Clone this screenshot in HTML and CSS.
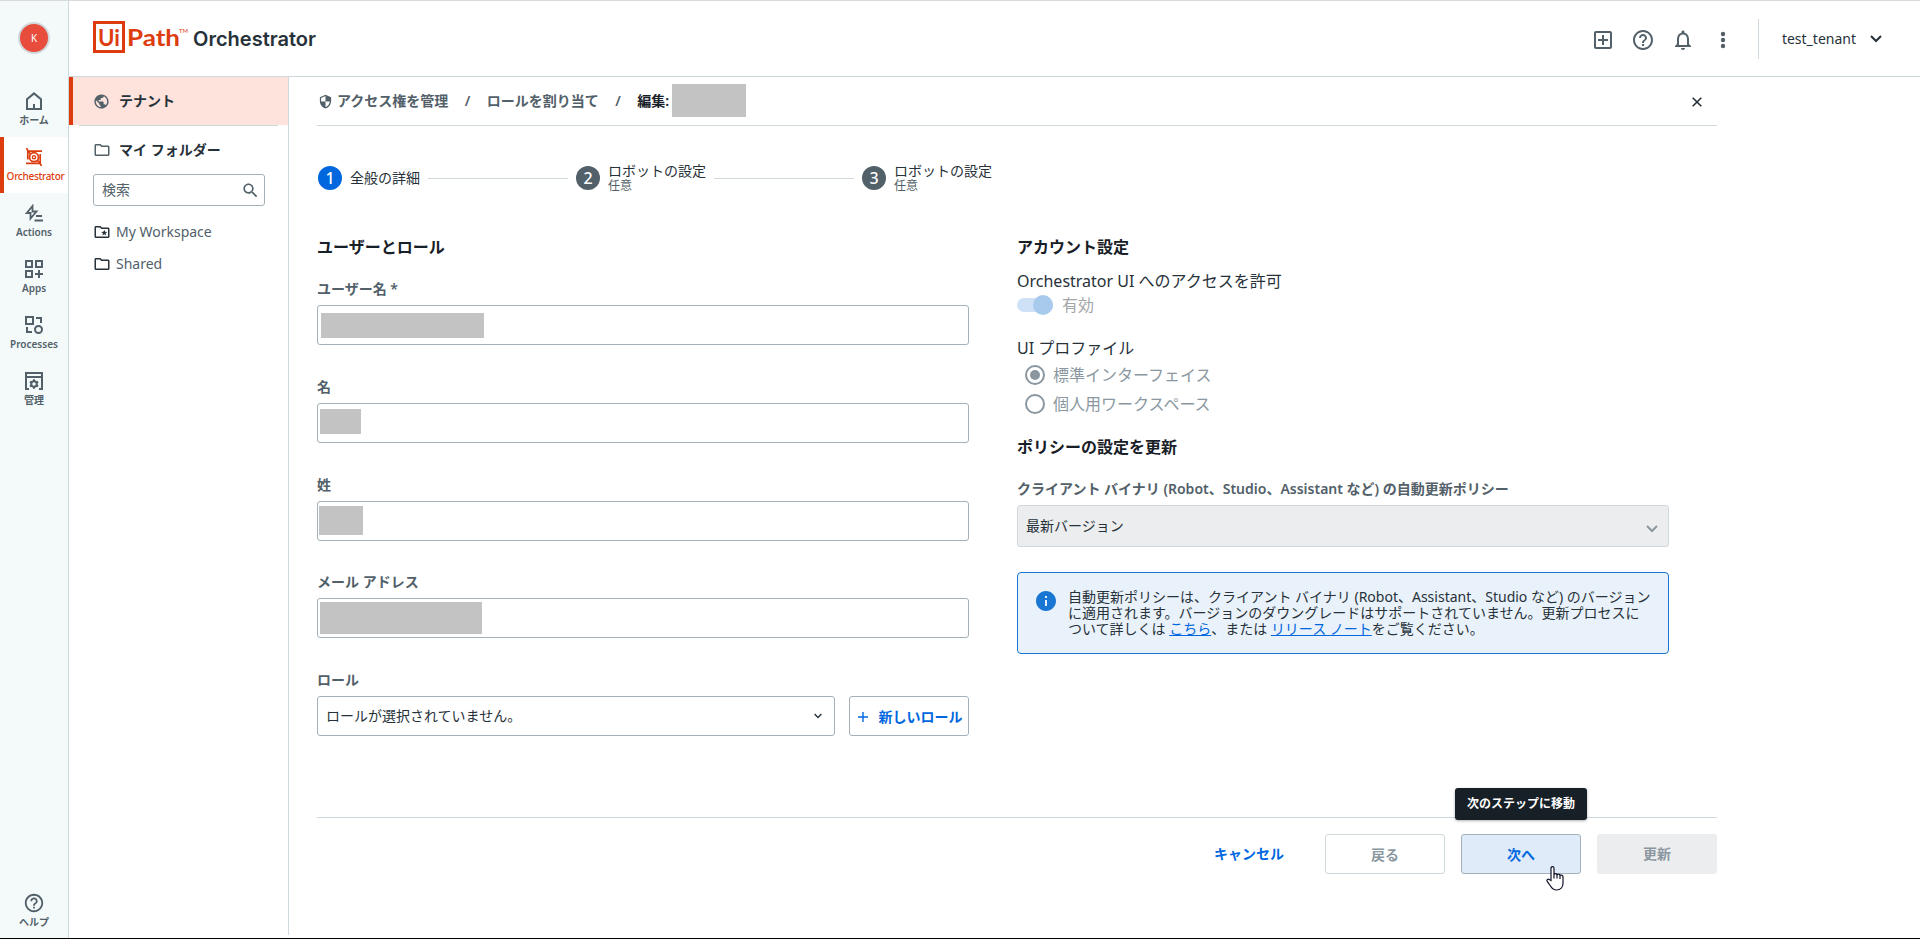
FILE: index.html
```html
<!DOCTYPE html>
<html lang="ja">
<head>
    <meta charset="UTF-8">
    <meta name="viewport" content="width=device-width, initial-scale=1.0">
    <title>UiPath Orchestrator</title>
    <link rel="stylesheet" href="styles.css">
</head>
<body>
    <!-- Product rail -->
    <nav class="rail">
        <div class="avatar">K</div>
        <a class="rail-item">
            <svg width="18" height="18" viewBox="0 0 18 18" fill="none" stroke="currentColor" stroke-width="2"><path d="M2 17V7.2L9 1.4l7 5.8V17zM9 17v-5"/></svg>
            <span>ホーム</span>
        </a>
        <a class="rail-item active">
            <svg width="18" height="18" viewBox="0 0 18 18" fill="none" stroke="currentColor"><path d="M1.500 0l1.500 3.200h14M2.800 3v8.500M16.500 18L15 15.300H1M15.200 15.500V6" stroke-width="1.700"/><circle cx="9" cy="9.200" r="4.500" stroke-width="1.800"/><circle cx="9" cy="9.200" r="1.600" stroke-width="1.400"/><path d="M2.800 3.200l3 3M15.200 15.300l-3-3" stroke-width="1.700"/></svg>
            <span>Orchestrator</span>
        </a>
        <a class="rail-item">
            <svg width="18" height="18" viewBox="0 0 18 18" fill="none" stroke="currentColor" stroke-width="1.800"><path d="M7.500 2L1.800 9h3.700v5.500L11.500 7.500H7.500z"/><path d="M11 12h6M9.500 16.500H18"/></svg>
            <span>Actions</span>
        </a>
        <a class="rail-item">
            <svg width="18" height="18" viewBox="0 0 18 18" fill="none" stroke="currentColor" stroke-width="2"><path d="M1 1h6v6H1zM11 1h6v6h-6zM1 11h6v6H1zM14 10v8M10 14h8"/></svg>
            <span>Apps</span>
        </a>
        <a class="rail-item">
            <svg width="18" height="18" viewBox="0 0 18 18" fill="none" stroke="currentColor" stroke-width="2"><path d="M1 1h7v7H1zM11 2h5v5M2 11v5h5"/><circle cx="13.500" cy="13.500" r="3.500"/></svg>
            <span>Processes</span>
        </a>
        <a class="rail-item">
            <svg width="18" height="18" viewBox="0 0 18 18" fill="none" stroke="currentColor" stroke-width="2"><path d="M4 17H1V1h16v16h-3M1 5h16"/><circle cx="9" cy="12" r="2.800"/><path d="M9 7.200v2M9 14.800v2M4.900 9.600l1.700 1M11.400 13.400l1.700 1M4.900 14.400l1.700-1M11.400 10.600l1.700-1"/></svg>
            <span>管理</span>
        </a>
        <a class="rail-item rail-help">
            <svg width="22" height="22" viewBox="0 0 24 24" fill="currentColor"><path d="M11 18h2v-2h-2v2zm1-16C6.480 2 2 6.480 2 12s4.480 10 10 10 10-4.480 10-10S17.520 2 12 2zm0 18c-4.410 0-8-3.590-8-8s3.590-8 8-8 8 3.590 8 8-3.590 8-8 8zm0-14c-2.210 0-4 1.790-4 4h2c0-1.100.9-2 2-2s2 .9 2 2c0 2-3 1.750-3 5h2c0-2.250 3-2.500 3-5 0-2.210-1.790-4-4-4z"/></svg>
            <span>ヘルプ</span>
        </a>
    </nav>

    <div class="page">
        <!-- Header -->
        <header class="header">
            <svg class="logo" width="226" height="35" viewBox="0 0 226 35">
                <rect x="1.500" y="1.500" width="29" height="29" fill="none" stroke="#dd3c0f" stroke-width="3"/>
                <text class="logo-ui" x="5" y="25" textLength="22" lengthAdjust="spacingAndGlyphs">Ui</text>
                <text class="logo-ui" x="34" y="25" textLength="53" lengthAdjust="spacingAndGlyphs">Path</text>
                <text class="logo-tm" x="86" y="12" textLength="9">TM</text>
                <text class="logo-name" x="100" y="25" textLength="123" lengthAdjust="spacingAndGlyphs">Orchestrator</text>
            </svg>
            <div class="header-actions">
                <svg width="24" height="24" viewBox="0 0 24 24" fill="currentColor"><path d="M19 3H5c-1.110 0-2 .9-2 2v14c0 1.100.89 2 2 2h14c1.100 0 2-.9 2-2V5c0-1.100-.9-2-2-2zm0 16H5V5h14v14zm-8-2h2v-4h4v-2h-4V7h-2v4H7v2h4z"/></svg>
                <svg width="24" height="24" viewBox="0 0 24 24" fill="currentColor"><path d="M11 18h2v-2h-2v2zm1-16C6.480 2 2 6.480 2 12s4.480 10 10 10 10-4.480 10-10S17.520 2 12 2zm0 18c-4.410 0-8-3.590-8-8s3.590-8 8-8 8 3.590 8 8-3.590 8-8 8zm0-14c-2.210 0-4 1.790-4 4h2c0-1.100.9-2 2-2s2 .9 2 2c0 2-3 1.750-3 5h2c0-2.250 3-2.500 3-5 0-2.210-1.790-4-4-4z"/></svg>
                <svg width="24" height="24" viewBox="0 0 24 24" fill="currentColor"><path d="M12 22c1.100 0 2-.9 2-2h-4c0 1.100.89 2 2 2zm6-6v-5c0-3.070-1.640-5.640-4.500-6.320V4c0-.83-.67-1.500-1.500-1.500s-1.500.67-1.500 1.500v.68C7.630 5.360 6 7.920 6 11v5l-2 2v1h16v-1l-2-2zm-2 1H8v-6c0-2.480 1.510-4.500 4-4.500s4 2.020 4 4.500v6z"/></svg>
                <svg width="24" height="24" viewBox="0 0 24 24" fill="currentColor"><circle cx="12" cy="6" r="2.200"/><circle cx="12" cy="12" r="2.200"/><circle cx="12" cy="18" r="2.200"/></svg>
            </div>
            <div class="tenant-select">
                <span>test_tenant</span>
                <svg width="12" height="8" viewBox="0 0 12 8" fill="none" stroke="currentColor" stroke-width="2"><path d="M1 1l5 5 5-5"/></svg>
            </div>
        </header>

        <div class="body">
            <!-- Folder sidebar -->
            <aside class="sidebar">
                <div class="tenant">
                    <svg width="17" height="17" viewBox="0 0 24 24" fill="currentColor"><path d="M12 2C6.480 2 2 6.480 2 12s4.480 10 10 10 10-4.480 10-10S17.520 2 12 2zm-1 17.930c-3.950-.49-7-3.850-7-7.930 0-.62.08-1.210.21-1.790L9 15v1c0 1.100.9 2 2 2v1.930zm6.900-2.540c-.26-.81-1-1.390-1.900-1.390h-1v-3c0-.55-.45-1-1-1H8v-2h2c.55 0 1-.45 1-1V7h2c1.100 0 2-.9 2-2v-.41c2.930 1.190 5 4.060 5 7.410 0 2.080-.8 3.970-2.100 5.390z"/></svg>
                    <span>テナント</span>
                </div>
                <div class="my-folders">
                    <svg width="18" height="18" viewBox="0 0 24 24" fill="currentColor"><path d="M9.170 6l2 2H20v10H4V6h5.170M10 4H4c-1.100 0-2 .9-2 2v12c0 1.100.9 2 2 2h16c1.100 0 2-.9 2-2V8c0-1.100-.9-2-2-2h-8l-2-2z"/></svg>
                    <span>マイ フォルダー</span>
                </div>
                <div class="search">
                    <span>検索</span>
                    <svg width="19" height="19" viewBox="0 0 24 24" fill="currentColor"><path d="M15.500 14h-.79l-.28-.27C15.410 12.590 16 11.110 16 9.500 16 5.910 13.090 3 9.500 3S3 5.910 3 9.500 5.910 16 9.500 16c1.610 0 3.090-.59 4.230-1.570l.27.28v.79l5 4.990L20.490 19l-4.990-5zm-6 0C7.010 14 5 11.990 5 9.500S7.010 5 9.500 5 14 7.010 14 9.500 11.990 14 9.500 14z"/></svg>
                </div>
                <div class="folder">
                    <svg width="18" height="18" viewBox="0 0 24 24" fill="currentColor"><path d="M9.170 6l2 2H20v10H4V6h5.170M10 4H4c-1.100 0-2 .9-2 2v12c0 1.100.9 2 2 2h16c1.100 0 2-.9 2-2V8c0-1.100-.9-2-2-2h-8l-2-2z"/><path d="M15 9l1.100 2.700 2.900.2-2.200 1.900.7 2.900-2.500-1.600-2.500 1.600.7-2.900-2.200-1.900 2.900-.2z"/></svg>
                    <span>My Workspace</span>
                </div>
                <div class="folder">
                    <svg width="18" height="18" viewBox="0 0 24 24" fill="currentColor"><path d="M9.170 6l2 2H20v10H4V6h5.170M10 4H4c-1.100 0-2 .9-2 2v12c0 1.100.9 2 2 2h16c1.100 0 2-.9 2-2V8c0-1.100-.9-2-2-2h-8l-2-2z"/></svg>
                    <span>Shared</span>
                </div>
            </aside>

            <main class="main">
                <!-- Breadcrumbs -->
                <div class="breadcrumbs">
                    <svg width="15" height="15" viewBox="0 0 24 24" fill="currentColor"><path d="M12 1L3 5v6c0 5.550 3.840 10.740 9 12 5.160-1.260 9-6.450 9-12V5l-9-4zm0 11h7c-.53 4.120-3.280 7.790-7 8.940V12H5V6.300l7-3.110V12z"/></svg>
                    <a>アクセス権を管理</a>
                    <span class="slash">/</span>
                    <a>ロールを割り当て</a>
                    <span class="slash">/</span>
                    <strong>編集:</strong>
                    <span class="mask mask-title"></span>
                    <svg class="close" width="10" height="10" viewBox="0 0 10 10" fill="none" stroke="currentColor" stroke-width="1.600"><path d="M.7.7l8.600 8.600M9.300.7L.7 9.300"/></svg>
                </div>

                <!-- Stepper -->
                <div class="stepper">
                    <div class="step current">
                        <span class="step-number">1</span>
                        <div class="step-label">全般の詳細</div>
                    </div>
                    <div class="step-line"></div>
                    <div class="step">
                        <span class="step-number">2</span>
                        <div class="step-label">ロボットの設定<small>任意</small></div>
                    </div>
                    <div class="step-line"></div>
                    <div class="step">
                        <span class="step-number">3</span>
                        <div class="step-label">ロボットの設定<small>任意</small></div>
                    </div>
                </div>

                <div class="columns">
                    <!-- Users and roles -->
                    <section class="column">
                        <h2>ユーザーとロール</h2>
                        <div class="field">
                            <label>ユーザー名 *</label>
                            <div class="input"><span class="mask mask-user"></span></div>
                        </div>
                        <div class="field">
                            <label>名</label>
                            <div class="input"><span class="mask mask-first"></span></div>
                        </div>
                        <div class="field">
                            <label>姓</label>
                            <div class="input"><span class="mask mask-last"></span></div>
                        </div>
                        <div class="field">
                            <label>メール アドレス</label>
                            <div class="input"><span class="mask mask-mail"></span></div>
                        </div>
                        <div class="field">
                            <label>ロール</label>
                            <div class="role-row">
                                <div class="input role-select">
                                    <span>ロールが選択されていません。</span>
                                    <svg width="8" height="6" viewBox="0 0 8 6" fill="none" stroke="currentColor" stroke-width="1.400"><path d="M.6 1L4 4.400 7.400 1"/></svg>
                                </div>
                                <button class="new-role">
                                    <svg width="10" height="10" viewBox="0 0 10 10" fill="none" stroke="currentColor" stroke-width="1.400"><path d="M5 0v10M0 5h10"/></svg>
                                    新しいロール
                                </button>
                            </div>
                        </div>
                    </section>

                    <!-- Account settings -->
                    <section class="column">
                        <h2>アカウント設定</h2>
                        <p class="setting-title">Orchestrator UI へのアクセスを許可</p>
                        <div class="toggle-row">
                            <span class="toggle"></span>
                            <span>有効</span>
                        </div>
                        <p class="setting-title profile-title">UI プロファイル</p>
                        <div class="radio-row"><span class="radio checked"></span>標準インターフェイス</div>
                        <div class="radio-row"><span class="radio"></span>個人用ワークスペース</div>
                        <h2 class="policy-title">ポリシーの設定を更新</h2>
                        <div class="field">
                            <label>クライアント バイナリ (Robot、Studio、Assistant など) の自動更新ポリシー</label>
                            <div class="input policy-select">
                                <span>最新バージョン</span>
                                <svg width="12" height="8" viewBox="0 0 12 8" fill="none" stroke="currentColor" stroke-width="2"><path d="M1 1l5 5 5-5"/></svg>
                            </div>
                        </div>
                        <div class="info">
                            <svg width="24" height="24" viewBox="0 0 24 24" fill="#1976d2"><path d="M12 2C6.480 2 2 6.480 2 12s4.480 10 10 10 10-4.480 10-10S17.520 2 12 2zm1 15h-2v-6h2v6zm0-8h-2V7h2v2z"/></svg>
                            <p>自動更新ポリシーは、クライアント バイナリ (Robot、Assistant、Studio など) のバージョン<br>に適用されます。バージョンのダウングレードはサポートされていません。更新プロセスに<br>ついて詳しくは <a>こちら</a>、または <a>リリース ノート</a>をご覧ください。</p>
                        </div>
                    </section>
                </div>

                <!-- Wizard buttons -->
                <footer class="footer">
                    <button class="btn-cancel">キャンセル</button>
                    <button class="btn btn-back">戻る</button>
                    <div class="next">
                        <button class="btn btn-next">次へ</button>
                        <div class="tooltip">次のステップに移動</div>
                        <svg class="cursor" width="18" height="25" viewBox="0 0 18 25" fill="#fff" stroke="#101028" stroke-width="1.200"><path d="M5 14.500V2.300c0-2.300 3-2.300 3 0V9c0-1.800 3-1.800 3 .3 0-1.700 3-1.500 3 .6 0-1.400 3-1.200 3 .9v6.500c0 4-2.500 6.700-6.500 6.700-3 0-4.500-1.500-6-4l-3.300-4.600C.3 13.700 2 12.500 3.300 13.400zM8 8v4.500M11 9v3.500M14 10v3"/></svg>
                    </div>
                    <button class="btn btn-update">更新</button>
                </footer>
            </main>
        </div>
    </div>
</body>
</html>
```

FILE: styles.css
```css
/* Global Styles */
* {
    box-sizing: border-box;
}

body {
    margin: 0;
    height: 939px;
    display: flex;
    overflow: hidden;
    border-top: 1px solid #d9dadb;
    border-bottom: 1px solid #000;
    background-color: #fff;
    color: #273139;
    font-family: "Noto Sans", "Noto Sans CJK JP", sans-serif;
    font-size: 14px;
    line-height: 20px;
}

h2, p {
    margin: 0;
}

svg {
    display: block;
    flex: none;
}

button {
    padding: 0;
    border: none;
    background: none;
    font-family: inherit;
    font-size: 14px;
    font-weight: 600;
    line-height: 20px;
    cursor: pointer;
}

/* Rail Styles */
.rail {
    width: 69px;
    flex: none;
    display: flex;
    flex-direction: column;
    background-color: #f4fafa;
    border-right: 1px solid #cfd8dd;
    color: #526069;
}

.avatar {
    width: 32px;
    height: 32px;
    margin: 21px auto 27px 18px;
    border: 2px solid #cfd8dd;
    border-radius: 50%;
    background-color: #e74c3c;
    color: #fff;
    font-size: 10px;
    line-height: 28px;
    text-align: center;
}

.rail-item {
    height: 56px;
    padding-top: 11px;
    display: flex;
    flex-direction: column;
    align-items: center;
    gap: 3px;
    font-size: 10px;
    font-weight: 600;
    line-height: 14px;
}

.rail-item.active {
    background-color: #fff;
    border-left: 4px solid #dd3c0f;
    padding-right: 4px;
    color: #dd3c0f;
    font-weight: 500;
    letter-spacing: -0.3px;
    white-space: nowrap;
}

.rail-item.active span {
    margin-left: 3px;
}

.rail-help {
    height: 48px;
    margin-top: auto;
    padding-top: 2px;
    gap: 1px;
}

/* Header Styles */
.page {
    flex: 1;
    display: flex;
    flex-direction: column;
}

.header {
    height: 76px;
    padding: 0 38px 0 24px;
    display: flex;
    align-items: center;
    border-bottom: 1px solid #cfd8dd;
}

.logo-ui {
    font: 700 23.5px Lato, sans-serif;
    fill: #dd3c0f;
}

.logo-tm {
    font: 400 6px Lato, sans-serif;
    fill: #dd3c0f;
}

.logo-name {
    font: 600 20px Inter, sans-serif;
    fill: #273139;
}

.header-actions {
    margin: 3px 23px 0 auto;
    display: flex;
    gap: 16px;
    color: #526069;
}

.tenant-select {
    height: 40px;
    padding-left: 23px;
    margin-top: 1px;
    display: flex;
    align-items: center;
    gap: 14px;
    border-left: 1px solid #cfd8dd;
}

.body {
    flex: 1;
    display: flex;
}

/* Sidebar Styles */
.sidebar {
    width: 220px;
    height: 858px;
    flex: none;
    border-right: 1px solid #cfd8dd;
}

.tenant {
    height: 48px;
    padding-left: 20px;
    display: flex;
    align-items: center;
    gap: 9px;
    border-left: 4px solid #dd3c0f;
    background-color: #fee2dc;
    font-weight: 600;
}

.tenant svg,
.my-folders svg {
    color: #526069;
}

.my-folders {
    height: 49px;
    margin: 0 10px;
    padding-left: 14px;
    display: flex;
    align-items: center;
    gap: 8px;
    border-top: 1px solid #cfd8dd;
    font-weight: 600;
}

.search {
    width: 172px;
    height: 32px;
    margin: 0 0 10px 24px;
    padding: 0 4px 0 8px;
    display: flex;
    align-items: center;
    justify-content: space-between;
    border: 1px solid #a4b1b8;
    border-radius: 3px;
    color: #526069;
}

.folder {
    height: 32px;
    padding-left: 24px;
    display: flex;
    align-items: center;
    gap: 5px;
}

.folder span {
    color: #526069;
}

/* Main Styles */
.main {
    width: 1400px;
    margin-left: 28px;
    display: flex;
    flex-direction: column;
}

.breadcrumbs {
    height: 49px;
    display: flex;
    align-items: center;
    border-bottom: 1px solid #cfd8dd;
    font-weight: 600;
    color: #526069;
}

.breadcrumbs svg {
    margin: 1px 4px 0 1px;
}

.breadcrumbs strong {
    font-weight: 600;
    color: #182027;
}

.slash {
    width: 38.5px;
    text-align: center;
}

.breadcrumbs .close {
    margin: 1px 15px 0 auto;
    color: #273139;
}

/* Grey boxes over hidden values */
.mask {
    display: block;
    background-color: #c3c3c3;
}

.mask-title {
    width: 74px;
    height: 33px;
    margin: 0 0 1px 3px;
}

.mask-user {
    width: 163px;
    height: 25px;
    margin: 7px 0 0 3px;
}

.mask-first {
    width: 41px;
    height: 25px;
    margin: 5px 0 0 2px;
}

.mask-last {
    width: 44px;
    height: 29px;
    margin: 4px 0 0 1px;
}

.mask-mail {
    width: 162px;
    height: 32px;
    margin: 3px 0 0 2px;
}

/* Stepper Styles */
.stepper {
    height: 104px;
    padding-left: 1px;
    display: flex;
    align-items: center;
}

.step {
    display: flex;
    align-items: center;
    gap: 8px;
}

.step-number {
    width: 24px;
    height: 24px;
    border-radius: 50%;
    background-color: #526069;
    color: #fff;
    font-size: 16px;
    font-weight: 500;
    line-height: 24px;
    text-align: center;
}

.step.current .step-number {
    background-color: #0067df;
}

.step-label {
    line-height: 16px;
}

.step-label small {
    display: block;
    font-size: 12px;
    line-height: 14px;
    color: #526069;
}

.step-line {
    width: 140px;
    height: 1px;
    margin: 0 8px;
    background-color: #cfd8dd;
}

/* Form Styles */
.columns {
    display: flex;
    gap: 48px;
}

.column {
    width: 652px;
    padding-top: 7px;
}

h2 {
    font-size: 16px;
    font-weight: 600;
    line-height: 20px;
    color: #182027;
}

.column h2 {
    margin-bottom: 22px;
}

.field {
    margin-bottom: 31.750px;
}

.field label {
    display: block;
    height: 26px;
    line-height: 20px;
    font-weight: 600;
    color: #526069;
}

.input {
    height: 40px;
    display: flex;
    align-items: flex-start;
    border: 1px solid #a4b1b8;
    border-radius: 3px;
}

.role-row {
    display: flex;
    gap: 14px;
}

.role-select {
    width: 518px;
    padding: 0 12px 0 8px;
    align-items: center;
    justify-content: space-between;
}

.new-role {
    width: 120px;
    height: 40px;
    padding: 2px 0 0 2px;
    display: flex;
    align-items: center;
    justify-content: center;
    gap: 11px;
    border: 1px solid #a4b1b8;
    border-radius: 3px;
    color: #0067df;
    white-space: nowrap;
}

/* Account Settings Styles */
.column .setting-title {
    font-size: 16px;
    line-height: 20px;
    margin-top: -8px;
}

.toggle-row {
    height: 28px;
    display: flex;
    align-items: center;
    gap: 9px;
    font-size: 16px;
    color: #a3a6a9;
}

.toggle {
    width: 36px;
    height: 14px;
    display: flex;
    align-items: center;
    justify-content: flex-end;
    border-radius: 7px;
    background-color: #cfe1f7;
}

.toggle::after {
    content: "";
    width: 20px;
    height: 20px;
    border-radius: 50%;
    background-color: #a8caed;
}

.column .profile-title {
    margin-top: 19px;
    margin-bottom: 2px;
}

.radio-row {
    height: 29px;
    padding-left: 8px;
    display: flex;
    align-items: center;
    gap: 8px;
    font-size: 16px;
    color: #8a97a0;
}

.radio {
    width: 20px;
    height: 20px;
    padding: 3px;
    border: 2px solid #8a97a0;
    border-radius: 50%;
}

.radio.checked::after {
    content: "";
    display: block;
    width: 10px;
    height: 10px;
    border-radius: 50%;
    background-color: #8a97a0;
}

.column .policy-title {
    margin-top: 19px;
}

.policy-select {
    height: 42px;
    padding: 0 10px 0 8px;
    align-items: center;
    justify-content: space-between;
    border-color: #cfd8dd;
    background-color: #ecedee;
}

.policy-select svg {
    margin-top: 6px;
    color: #8a97a0;
}

.info {
    height: 82px;
    margin-top: -7px;
    padding: 16px 0 0 16px;
    display: flex;
    gap: 10px;
    border: 1px solid #1976d2;
    border-radius: 4px;
    background-color: #e9f1fa;
}

.info p {
    line-height: 16px;
    white-space: nowrap;
}

.info a {
    color: #0067df;
    text-decoration: underline;
}

/* Footer Styles */
.footer {
    margin-top: 49px;
    padding-top: 16px;
    display: flex;
    justify-content: flex-end;
    gap: 16px;
    border-top: 1px solid #cfd8dd;
}

.btn-cancel {
    margin-right: 25px;
    color: #0067df;
}

.btn {
    width: 120px;
    height: 40px;
    border-radius: 3px;
}

.btn-back {
    padding-top: 2px;
    border: 1px solid #cfd8dd;
    color: #8a97a0;
}

.btn-next {
    padding-top: 2px;
    border: 1px solid #a4b1b8;
    background-color: #e0ebf9;
    color: #0067df;
}

.btn-update {
    background-color: #ecedee;
    color: #8a97a0;
}

.next {
    position: relative;
}

.tooltip {
    position: absolute;
    top: -46px;
    left: -6px;
    width: 132px;
    height: 32px;
    border-radius: 3px;
    background-color: #182027;
    box-shadow: 0 1px 3px rgba(0, 0, 0, 0.3);
    color: #fff;
    font-size: 12px;
    font-weight: 700;
    line-height: 31px;
    text-align: center;
}

.cursor {
    position: absolute;
    top: 32px;
    left: 85px;
}
```
